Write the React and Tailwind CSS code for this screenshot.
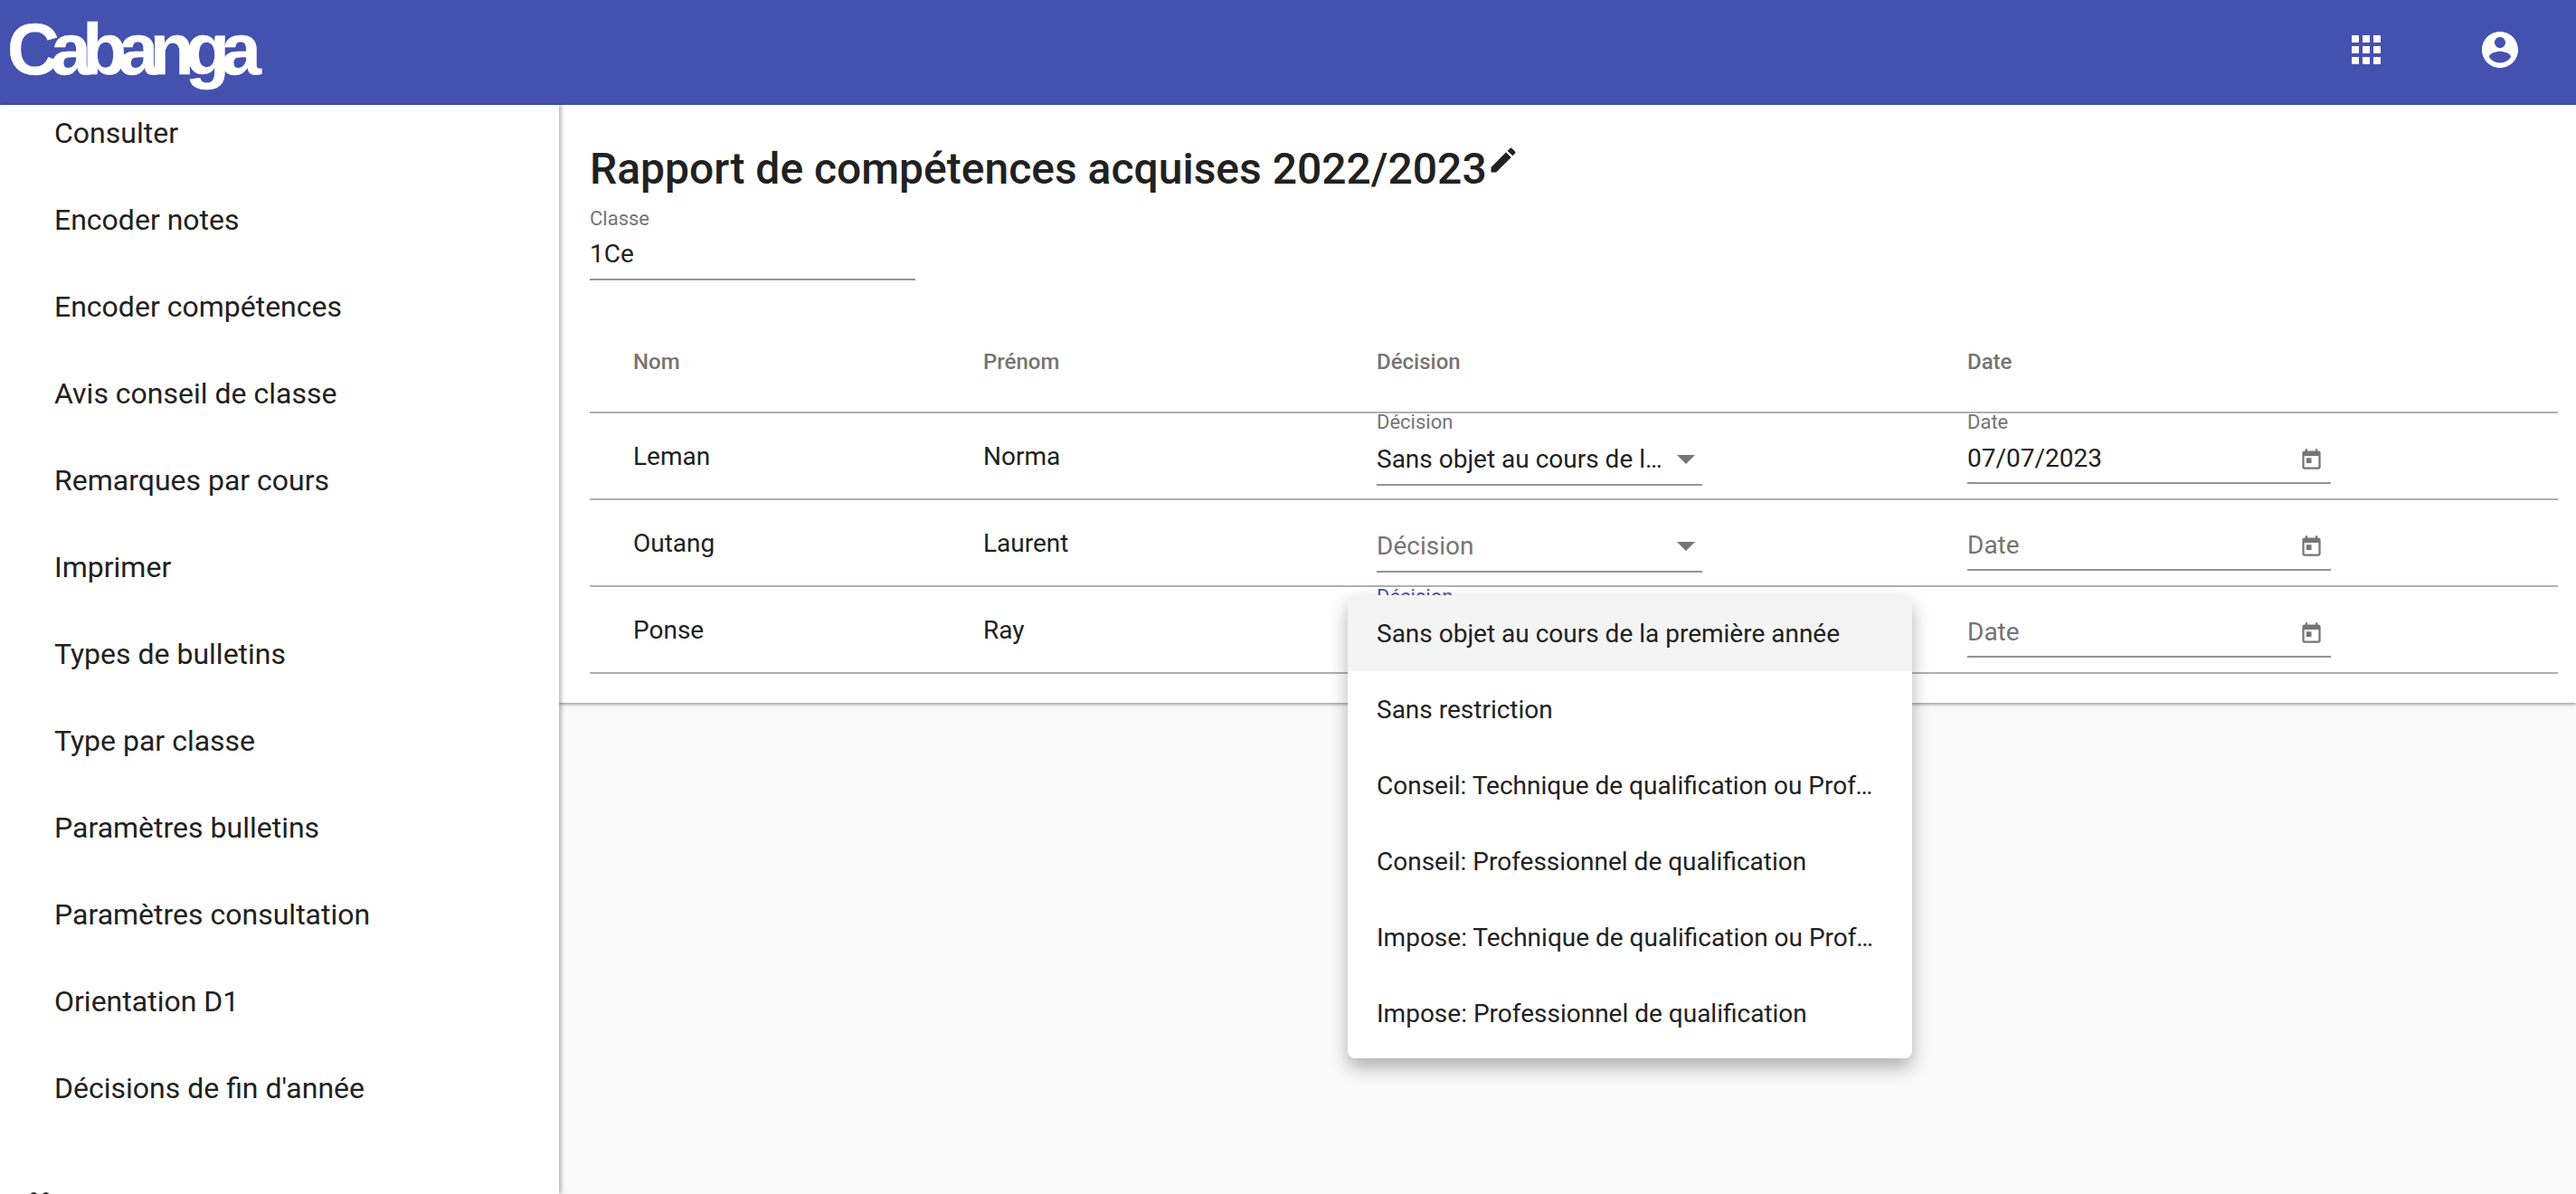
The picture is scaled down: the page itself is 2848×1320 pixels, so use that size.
const NAV_ITEMS = [
  "Consulter",
  "Encoder notes",
  "Encoder compétences",
  "Avis conseil de classe",
  "Remarques par cours",
  "Imprimer",
  "Types de bulletins",
  "Type par classe",
  "Paramètres bulletins",
  "Paramètres consultation",
  "Orientation D1",
  "Décisions de fin d'année",
];

const MENU_ITEMS = [
  "Sans objet au cours de la première année",
  "Sans restriction",
  "Conseil: Technique de qualification ou Professionnel de qualification",
  "Conseil: Professionnel de qualification",
  "Impose: Technique de qualification ou Professionnel de qualification",
  "Impose: Professionnel de qualification",
];

const ROWS = [
  { nom: "Leman", prenom: "Norma", decision: "Sans objet au cours de la première année", date: "07/07/2023" },
  { nom: "Outang", prenom: "Laurent" },
  { nom: "Ponse", prenom: "Ray", open: true },
];

const CalendarIcon = () => (
  <svg viewBox="0 0 24 24" className="w-[27px] h-[27px] fill-[#757575] shrink-0 mb-[4px]">
    <path d="M19 3h-1V1h-2v2H8V1H6v2H5c-1.11 0-1.99.9-1.99 2L3 19c0 1.1.89 2 2 2h14c1.1 0 2-.9 2-2V5c0-1.1-.9-2-2-2zm0 16H5V8h14v11zM7 10h5v5H7z" />
  </svg>
);

const DecisionField = ({ value, open }) => {
  if (open) {
    return (
      <div className="w-[360px] h-[94px]">
        <div className="text-[22px] leading-[22px] text-[#4551af]">Décision</div>
      </div>
    );
  }
  return (
    <div className="w-[360px] h-[94px] relative">
      {value && (
        <div className="absolute left-0 -top-[1px] text-[22px] leading-[22px] text-[#757575]">Décision</div>
      )}
      <div className="h-[80px] border-b-2 border-[#949494] flex items-end pb-[8px]">
        <div
          className={`flex-1 min-w-0 truncate text-[28px] leading-[38px] ${
            value ? "text-[#212121]" : "text-[#757575]"
          }`}
        >
          {value || "Décision"}
        </div>
        <div className="w-0 h-0 ml-[16px] mr-[8px] mb-[14px] border-x-[10px] border-x-transparent border-t-[10px] border-t-[#757575]" />
      </div>
    </div>
  );
};

const DateField = ({ value }) => (
  <div className="w-[402px] h-[94px] relative">
    {value && (
      <div className="absolute left-0 -top-[1px] text-[22px] leading-[22px] text-[#757575]">Date</div>
    )}
    <div className="h-[78px] border-b-2 border-[#949494] flex items-end justify-between pb-[7px] pr-[8px]">
      <div className={`text-[28px] leading-[38px] ${value ? "text-[#212121]" : "text-[#757575]"}`}>
        {value || "Date"}
      </div>
      <CalendarIcon />
    </div>
  </div>
);

const App = () => {
  return (
    <div
      className="relative w-[2848px] h-[1320px] overflow-hidden bg-[#fafafa] text-[#212121] flex flex-col"
      style={{ fontFamily: "Roboto, sans-serif" }}
    >
      <header className="h-[116px] shrink-0 bg-[#4551af] flex items-start justify-between pl-[8px] pr-[60px] pt-[31px]">
        <div
          className="text-white font-bold text-[80px] leading-[48px] tracking-[-9.5px] [-webkit-text-stroke:0.5px_white]"
          style={{ fontFamily: '"Liberation Sans", sans-serif' }}
        >
          Cabanga
        </div>
        <div className="flex gap-[100px]">
          <svg viewBox="0 0 24 24" className="w-[48px] h-[48px] fill-white">
            <path d="M4 8h4V4H4v4zm6 12h4v-4h-4v4zm-6 0h4v-4H4v4zm0-6h4v-4H4v4zm6 0h4v-4h-4v4zm6-10v4h4V4h-4zm-6 4h4V4h-4v4zm6 6h4v-4h-4v4zm0 6h4v-4h-4v4z" />
          </svg>
          <svg viewBox="0 0 24 24" className="w-[48px] h-[48px] fill-white">
            <path d="M12 2C6.48 2 2 6.48 2 12s4.48 10 10 10 10-4.48 10-10S17.52 2 12 2zm0 3c1.66 0 3 1.34 3 3s-1.34 3-3 3-3-1.34-3-3 1.34-3 3-3zm0 14.2c-2.5 0-4.71-1.28-6-3.22.03-1.99 4-3.08 6-3.08 1.99 0 5.97 1.09 6 3.08-1.29 1.94-3.5 3.22-6 3.22z" />
          </svg>
        </div>
      </header>

      <div className="flex-1 min-h-0 flex">
        <aside className="w-[618px] shrink-0 bg-white z-10 shadow-[3px_0_4px_rgba(0,0,0,0.25)] overflow-hidden">
          <nav className="-mt-[17px]">
            {NAV_ITEMS.map((item) => (
              <div key={item} className="h-[96px] flex items-center pl-[60px] text-[32px]">
                {item}
              </div>
            ))}
            {/* next section, only the top of its icon is still visible */}
            <svg viewBox="0 0 24 24" className="w-[40px] h-[40px] fill-[#212121] ml-[24px] mt-[59px]">
              <path d="M16 11c1.66 0 2.99-1.34 2.99-3S17.66 5 16 5c-1.66 0-3 1.34-3 3s1.34 3 3 3zm-8 0c1.66 0 2.99-1.34 2.99-3S9.66 5 8 5C6.34 5 5 6.34 5 8s1.34 3 3 3zm0 2c-2.33 0-7 1.17-7 3.5V19h14v-2.5c0-2.33-4.67-3.5-7-3.5zm8 0c-.29 0-.62.03-.97.05 1.16.84 1.97 1.97 1.97 3.45V19h6v-2.5c0-2.33-4.67-3.5-7-3.5z" />
            </svg>
          </nav>
        </aside>

        <main className="flex-1 min-w-0">
          <section className="h-[661px] bg-white shadow-[0_2px_3px_rgba(0,0,0,0.35)] pl-[34px] pr-[20px]">
            <div className="flex items-start pt-[40px]">
              <h1 className="text-[48px] leading-[62px] font-medium">Rapport de compétences acquises 2022/2023</h1>
              <svg viewBox="0 0 24 24" className="w-[36px] h-[36px] fill-[#212121] mt-[3px]">
                <path d="M3 17.25V21h3.75L17.81 9.94l-3.75-3.75L3 17.25zM20.71 7.04c.39-.39.39-1.02 0-1.41l-2.34-2.34c-.39-.39-1.02-.39-1.41 0l-1.83 1.83 3.75 3.75 1.83-1.83z" />
              </svg>
            </div>
            <div className="w-[360px] mt-[11px] h-[81px] border-b-2 border-[#949494]">
              <div className="text-[22px] leading-[26px] text-[#757575]">Classe</div>
              <div className="text-[28px] leading-[40px] mt-[6px]">1Ce</div>
            </div>

            <div className="mt-[35px]">
              <div className="grid grid-cols-[387px_435px_653px_1fr] pl-[48px] h-[112px] border-b-2 border-[#b0b0b0] items-center text-[24px] font-medium text-[#757575]">
                <div>Nom</div>
                <div>Prénom</div>
                <div>Décision</div>
                <div>Date</div>
              </div>
              {ROWS.map((row) => (
                <div
                  key={row.nom}
                  className="grid grid-cols-[387px_435px_653px_1fr] pl-[48px] h-[96px] border-b-2 border-[#b0b0b0] items-start text-[28px]"
                >
                  <div className="h-[96px] flex items-center">{row.nom}</div>
                  <div className="h-[96px] flex items-center">{row.prenom}</div>
                  <DecisionField value={row.decision} open={row.open} />
                  <DateField value={row.date} />
                </div>
              ))}
            </div>
          </section>
        </main>
      </div>

      <div className="absolute left-[1490px] top-[658px] w-[624px] h-[512px] bg-white rounded-[8px] overflow-hidden z-20 shadow-[0_10px_20px_rgba(0,0,0,0.3)] text-[28px]">
        {MENU_ITEMS.map((item, i) => (
          <div
            key={item}
            className={`h-[84px] flex items-center pl-[32px] pr-[36px] pt-[2px] ${i === 0 ? "bg-[#f4f4f4]" : ""}`}
          >
            <span className="truncate">{item}</span>
          </div>
        ))}
      </div>
    </div>
  );
};

export default App;
